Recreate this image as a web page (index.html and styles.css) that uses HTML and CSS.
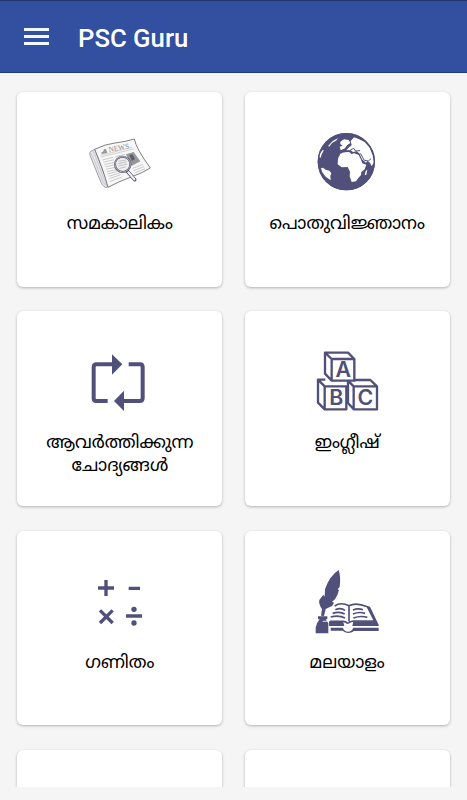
FILE: index.html
```html
<!DOCTYPE html>
<html lang="ml">
<head>
    <meta charset="UTF-8">
    <meta name="viewport" content="width=device-width, initial-scale=1.0">
    <title>PSC Guru</title>
    <link rel="stylesheet" href="styles.css">
</head>
<body>

    <header class="topBar">
        <div class="menuBtn">
            <span></span>
            <span></span>
            <span></span>
        </div>
        <h1>PSC Guru</h1>
    </header>

    <main class="cardWrap">

        <div class="card">
            <svg class="icon" viewBox="0 0 240 225">
                <path d="M44 73 L32 79 Q27 83 30 91 L57 158 Q66 184 78 188 Q87 187 85 177 L46 77 Z" fill="#e6e6ea" stroke="#77777f" stroke-width="2"/>
                <path d="M33 86 Q42 100 57 142 Q68 172 79 184 M39 79 Q47 93 64 141 L80 180" fill="none" stroke="#bbbbc2" stroke-width="2"/>
                <path d="M44 73 Q76 57 105 54 Q137 50 163 42 Q169 72 211 129 Q186 145 151 157 Q113 171 84 187 Q70 134 44 73 Z" fill="#f7f7f7" stroke="#66666b" stroke-width="2.5"/>
                <path d="M65 87 L64 82 L69 80 L73 71 L78 73 L82 84 Z" fill="#999"/>
                <text class="newsText" transform="translate(87 81) rotate(-10)">NEWS</text>
                <path d="M62 96 Q108 85 161 72 M62 91 Q110 79 156 67" fill="none" stroke="#aaa" stroke-width="1.5"/>
                <path d="M138 88 L161 81 L181 109 L154 123 Z" fill="#96969b"/>
                <path d="M148 91 L157 88 L165 101 L156 108 Z" fill="#5d5d65"/>
                <path d="M67 105 l32 -8 M70 112 l32 -8 M73 119 l30 -7 M76 126 l27 -7 M78 133 l27 -6 M81 140 l27 -6 M83 147 l29 -8 M86 154 l32 -10 M88 161 l34 -12 M90 169 l37 -13 M107 95 l28 -7 M158 130 l31 -12 M160 137 l32 -12 M164 144 l31 -13" stroke="#c2c2c2" stroke-width="2.5"/>
                <path d="M143 140 L164 164" stroke="#45455e" stroke-width="11" stroke-linecap="round"/>
                <path d="M145 142 L163 163" stroke="#eeeef3" stroke-width="7" stroke-linecap="round"/>
                <circle cx="128" cy="118" r="23" fill="#ececf0" fill-opacity=".85" stroke="#56566d" stroke-width="6"/>
                <circle cx="128" cy="118" r="23" fill="none" stroke="#d6d6df" stroke-width="2"/>
                <path d="M116 109 l22 -4 M114 116 l26 -5 M115 123 l25 -5 M118 130 l19 -4" stroke="#aaa" stroke-width="2"/>
            </svg>
            <p>സമകാലികം</p>
        </div>

        <div class="card">
            <svg class="icon" viewBox="3 0 240 225">
                <circle class="fill" cx="121" cy="110" r="86"/>
                <g fill="#fff">
                    <path d="M103 50 L114 43 L128 45 L133 54 L124 60 L117 70 L104 76 L101 65 L110 62 L103 57 Z"/>
                    <path d="M134 48 L144 37 L158 42 L176 51 L191 68 L200 91 L204 112 L197 124 L192 113 L184 108 L180 113 L168 103 L160 85 L151 79 L141 81 L133 75 L121 76 L130 66 L137 61 Z"/>
                    <path d="M103 86 Q111 80 130 81 L136 87 L145 85 L158 90 L164 102 L169 115 L181 119 L176 133 L166 141 L165 150 L157 159 L150 169 L137 171 L131 154 L132 140 L125 126 L107 127 L95 118 L96 101 Z"/>
                    <path d="M67 62 L80 48 L97 39 L90 47 L78 54 L69 66 Z"/>
                    <path d="M41 87 L49 76 L54 76 L47 88 L44 98 L40 97 Z"/>
                    <path d="M45 130 L51 128 L59 134 L70 137 L76 145 L73 153 L74 166 L59 155 L49 142 Z"/>
                    <path d="M179 138 L184 134 L181 149 L176 151 Z"/>
                </g>
                <path d="M163 85 L175 106 L187 108 L195 101 M133 75 L143 70 L149 78 L162 77" fill="none" stroke="#50507a" stroke-width="3"/>
                <circle class="thinLine" cx="121" cy="110" r="84"/>
            </svg>
            <p>പൊതുവിജ്ഞാനം</p>
        </div>

        <div class="card">
            <svg class="icon" viewBox="0 -3 240 225">
                <path class="loopLine" d="M83 168 H49 Q41 168 41 160 V67 Q41 58 50 58 H98 M146 58 H180 Q188 58 188 66 V159 Q188 168 179 168 H130"/>
                <path class="fill" d="M96 28 L127 58 L96 89 Z M132 137 L102 168 L132 198 Z"/>
            </svg>
            <p>ആവർത്തിക്കുന്ന<br>ചോദ്യങ്ങൾ</p>
        </div>

        <div class="card">
            <svg class="icon" viewBox="3 -3 240 225">
                <g class="blockLine">
                    <path d="M77 42 H145 V107 H77 Z M77 42 L57 23 H126 L145 42 M57 23 V86 L77 107"/>
                    <path d="M56 124 H121 V193 H56 Z M56 124 L36 104 H58 M36 104 V173 L56 193"/>
                    <path d="M143 124 H213 V193 H143 Z M143 124 L126 107 M145 105 H193 L213 124 M126 107 V174 L143 193"/>
                </g>
                <text class="blockText" x="112" y="97">A</text>
                <text class="blockText" x="91" y="181">B</text>
                <text class="blockText" x="178" y="181">C</text>
            </svg>
            <p>ഇംഗ്ലീഷ്</p>
        </div>

        <div class="card">
            <svg class="icon" viewBox="0 -3 240 225">
                <path class="mathLine" d="M54 69 H102 M78 45 V93 M146 70 H180 M138 153 H186 M60 136 L98 174 M98 136 L60 174"/>
                <circle class="fill" cx="162" cy="133" r="8"/>
                <circle class="fill" cx="162" cy="174" r="8"/>
            </svg>
            <p>ഗണിതം</p>
        </div>

        <div class="card">
            <svg class="icon" viewBox="3 6 240 225">
                <!-- feather -->
                <path class="fill" d="M98 24 Q105 47 101 75 L95 82 L99 84 Q95 101 87 112 L78 119 L84 122 L79 131 Q68 137 59 141 L54 162 L45 161 L48 141 Q37 126 40 114 L52 98 L56 104 L57 82 Q70 42 98 24 Z"/>
                <!-- ink pot -->
                <path class="fill" d="M36 163 H64 V172 H59 L67 184 V214 H29 V197 Q31 183 41 172 H36 Z"/>
                <path d="M50 178 H63" stroke="#fff" stroke-width="2.5"/>
                <!-- book -->
                <path class="bookLine" d="M72 178 H111 Q119 178 125 184 Q133 178 142 177 H206 L184 134 Q150 120 129 131 Q104 119 86 132 M129 131 V178"/>
                <path class="pageLine" d="M88 143 Q105 136 117 145 M80 154 Q102 147 116 156 M74 165 Q99 159 117 168 M141 144 Q156 138 171 143 M141 156 Q158 148 177 154 M142 168 Q164 160 184 166"/>
                <path class="fill" d="M69 178 H111 L115 192 H69 Z M142 178 H204 L184 132 L192 134 L218 188 V192 H139 Z"/>
                <path class="fill" d="M74 197 H110 Q116 209 126 209 Q137 209 142 197 H218 V207 H144 Q137 213 126 213 Q116 212 110 206 H74 Z"/>
                <circle cx="126" cy="194" r="9" fill="#fff"/>
            </svg>
            <p>മലയാളം</p>
        </div>

        <div class="card"></div>
        <div class="card"></div>

    </main>

</body>
</html>
```
FILE: styles.css
```css
*{
    box-sizing: border-box;
}

body{
    margin: 0;
    height: 800px;
    overflow: hidden;
    background-color: #f5f5f5;
    font-family: "Noto Sans Malayalam", "Noto Sans", sans-serif;
}

.topBar{
    height: 73px;
    padding: 3px 24px 0;
    display: flex;
    align-items: center;
    background-color: #324fa0;
    border-top: 1px solid #27366d;
    border-bottom: 1px solid #193b85;
}

.menuBtn{
    width: 25px;
    margin-top: -3px;
    display: flex;
    flex-direction: column;
    gap: 4px;
}

.menuBtn span{
    height: 3px;
    background-color: #f2f8ff;
}

.topBar h1{
    margin: 0 0 0 29px;
    font-family: Roboto, sans-serif;
    font-size: 25.7px;
    font-weight: 500;
    color: #fff;
}

.cardWrap{
    height: 714px;
    padding: 19px 17.4px 0;
    display: grid;
    grid-template-columns: 205px 205px;
    grid-auto-rows: 194.7px;
    column-gap: 22.3px;
    row-gap: 24.7px;
    overflow: hidden;
}

.card{
    padding-top: 33px;
    text-align: center;
    background-color: #fff;
    border-radius: 6px;
    box-shadow: 0 1px 3px rgba(0, 0, 0, 0.28);
}

.card p{
    margin: 14px 0 0;
    font-size: 17.5px;
    line-height: 23px;
    color: #000;
}

.icon{
    display: block;
    width: 80px;
    height: 75px;
    margin: 0 auto;
}

.fill{
    fill: #50507a;
}

.thinLine{
    fill: none;
    stroke: #50507a;
    stroke-width: 4;
}

.loopLine{
    fill: none;
    stroke: #50507a;
    stroke-width: 12;
}

.blockLine{
    fill: none;
    stroke: #50507a;
    stroke-width: 7;
    stroke-linejoin: round;
}

.blockText{
    font-family: Inter, sans-serif;
    font-size: 64px;
    font-weight: 600;
    text-anchor: middle;
    fill: #50507a;
}

.newsText{
    font-family: "Liberation Serif", serif;
    font-size: 22px;
    fill: #888;
}

.mathLine{
    fill: none;
    stroke: #50507a;
    stroke-width: 10;
}

.bookLine{
    fill: none;
    stroke: #50507a;
    stroke-width: 5;
}

.pageLine{
    fill: none;
    stroke: #50507a;
    stroke-width: 5;
}
```
